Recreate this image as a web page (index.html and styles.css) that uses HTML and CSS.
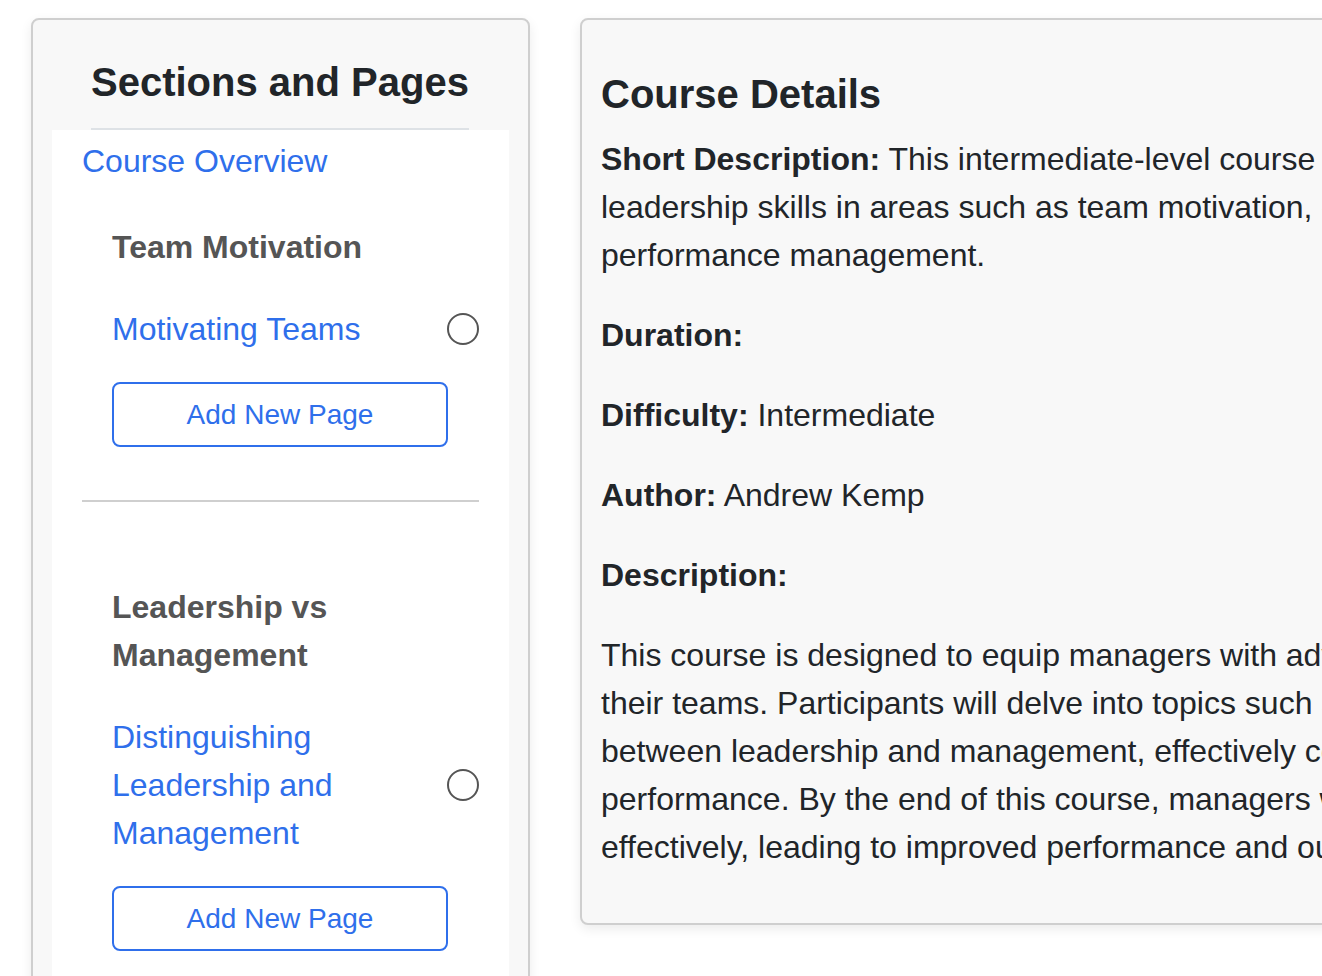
FILE: index.html
```html
<!DOCTYPE html>
<html lang="en">
<head>
    <meta charset="UTF-8">
    <meta name="viewport" content="width=device-width, initial-scale=1.0">
    <title>Course Editor</title>
    <link rel="stylesheet" href="styles.css">
</head>
<body>

    <div class="layout">
        <!-- Left column: outline of the course -->
        <aside class="sidebar card">
            <h2 class="sidebar-title">Sections and Pages</h2>

            <div class="outline">
                <a href="#" class="overview-link">Course Overview</a>

                <div class="section">
                    <h3 class="section-title">Team Motivation</h3>
                    <div class="page-row">
                        <a href="#" class="page-link">Motivating Teams</a>
                        <span class="page-status"></span>
                    </div>
                    <button type="button" class="add-page-btn">Add New Page</button>
                </div>

                <hr class="section-divider">

                <div class="section">
                    <h3 class="section-title">Leadership vs Management</h3>
                    <div class="page-row">
                        <a href="#" class="page-link">Distinguishing Leadership and Management</a>
                        <span class="page-status"></span>
                    </div>
                    <button type="button" class="add-page-btn">Add New Page</button>
                </div>

                <hr class="section-divider">

                <div class="section">
                    <h3 class="section-title">Performance Management</h3>
                </div>
            </div>
        </aside>

        <!-- Right column: course details -->
        <main class="details card">
            <h2 class="details-title">Course Details</h2>
            <p><strong>Short Description:</strong> This intermediate-level course focuses on developing the essential leadership skills in areas such as team motivation, effective communication, and performance management.</p>
            <p><strong>Duration:</strong> </p>
            <p><strong>Difficulty:</strong> Intermediate</p>
            <p><strong>Author:</strong> Andrew Kemp</p>
            <p><strong>Description:</strong></p>
            <p>This course is designed to equip managers with advanced skills to effectively motivate their teams. Participants will delve into topics such as team motivation, the distinctions between leadership and management, effectively communicating and managing performance. By the end of this course, managers will be able to guide their teams effectively, leading to improved performance and outcomes.</p>
        </main>
    </div>

</body>
</html>
```

FILE: styles.css
```css
* {
    box-sizing: border-box;
}

body {
    font-family: "Liberation Sans", Arial, sans-serif;
    font-size: 32px;
    line-height: 1.5;
    color: #212529;
    background-color: #fff;
    margin: 0;
    overflow: hidden;
}

.layout {
    display: flex;
    align-items: flex-start;
    gap: 50px;
    padding: 18px 0 0 31px;
}

.card {
    background-color: #f8f8f8;
    border: 2px solid #cfcfcf;
    border-radius: 8px;
    box-shadow: 0 4px 12px rgba(0, 0, 0, 0.08);
    flex-shrink: 0;
}

.sidebar {
    width: 499px;
    padding: 38px 19px 0;
}

.sidebar-title {
    font-size: 40px;
    line-height: 48px;
    font-weight: bold;
    white-space: nowrap;
    margin: 0 40px 0 39px;
    padding-bottom: 22px;
    border-bottom: 2px solid #dee2e6;
}

.outline {
    background-color: #fff;
    padding: 7px 30px 60px;
}

.overview-link {
    display: block;
    color: #2f6feb;
    text-decoration: none;
}

.section {
    padding: 38px 0 0 30px;
}

.section-title {
    font-size: 32px;
    line-height: 48px;
    font-weight: bold;
    color: #555;
    margin: 0;
}

.page-row {
    display: flex;
    align-items: center;
    gap: 20px;
    margin-top: 34px;
}

.page-link {
    flex: 1;
    color: #2f6feb;
    text-decoration: none;
}

.page-status {
    width: 32px;
    height: 32px;
    border: 2px solid #555;
    border-radius: 50%;
    flex-shrink: 0;
}

.add-page-btn {
    display: block;
    width: 336px;
    margin-top: 29px;
    padding: 10px 0;
    font-family: inherit;
    font-size: 28px;
    line-height: 41px;
    color: #2f6feb;
    background-color: #fff;
    border: 2px solid #2f6feb;
    border-radius: 8px;
    cursor: pointer;
}

.section-divider {
    border: none;
    border-top: 2px solid #cfcfcf;
    margin: 53px 0 43px;
}

.details {
    width: 1302px;
    padding: 20px 19px;
}

.details-title {
    font-size: 40px;
    line-height: 48px;
    font-weight: bold;
    margin: 30px 0 17px;
}

.details p {
    margin: 0 0 32px;
}
```
